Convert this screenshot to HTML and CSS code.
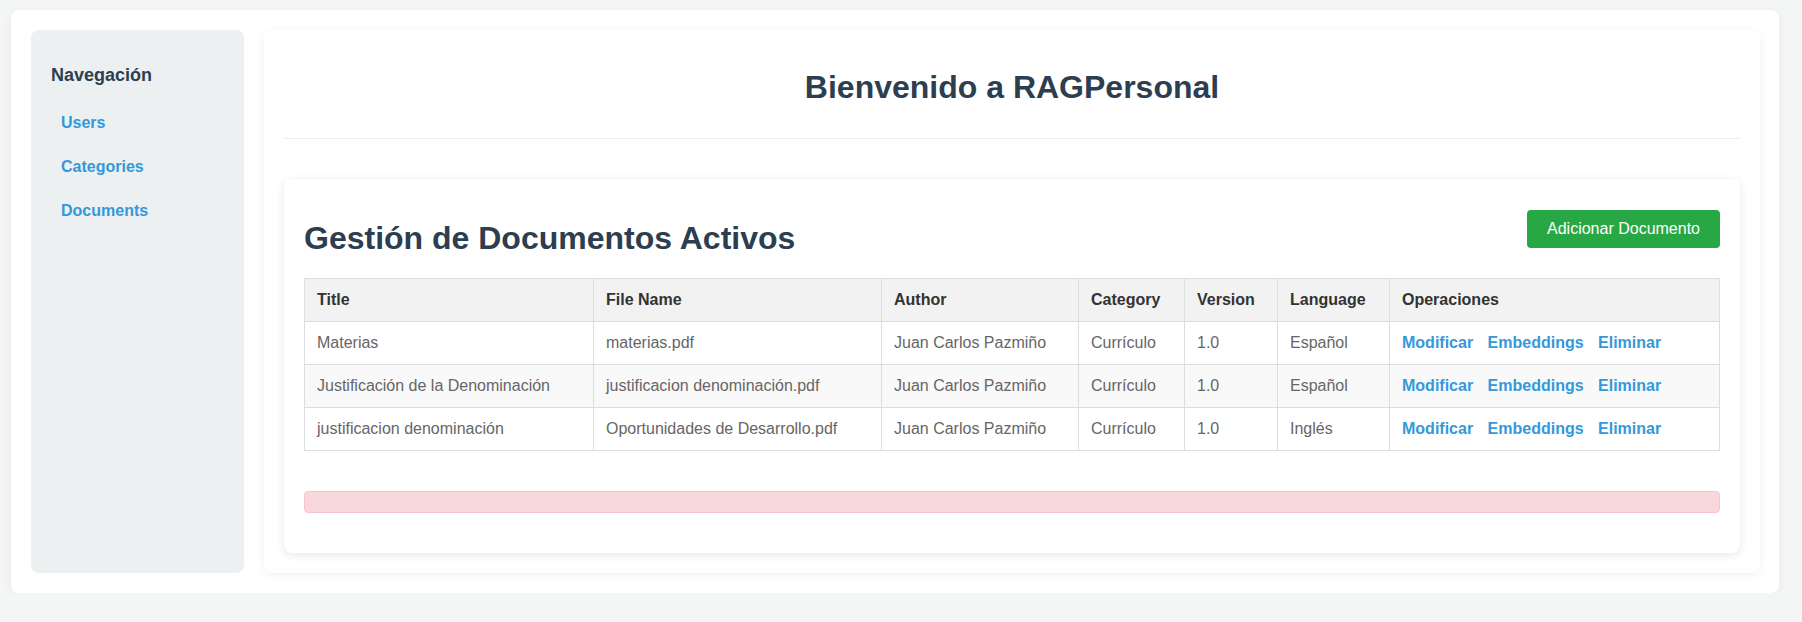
FILE: index.html
```html
<!DOCTYPE html>
<html lang="es">
<head>
<meta charset="utf-8">
<title>RAGPersonal</title>
<link rel="stylesheet" href="styles.css">
</head>
<body>
<div class="app">
  <aside class="sidebar">
    <h3 class="nav-title">Navegación</h3>
    <ul class="nav-list">
      <li><a href="#" class="nav-link">Users</a></li>
      <li><a href="#" class="nav-link">Categories</a></li>
      <li><a href="#" class="nav-link">Documents</a></li>
    </ul>
  </aside>
  <main class="main">
    <header class="page-header">
      <h1 class="page-title">Bienvenido a RAGPersonal</h1>
    </header>
    <section class="card">
      <div class="card-head">
        <h2 class="card-title">Gestión de Documentos Activos</h2>
        <button class="btn-add" type="button">Adicionar Documento</button>
      </div>
      <table class="doc-table">
        <colgroup>
          <col class="c-title">
          <col class="c-file">
          <col class="c-author">
          <col class="c-cat">
          <col class="c-ver">
          <col class="c-lang">
          <col class="c-ops">
        </colgroup>
        <thead>
          <tr>
            <th>Title</th>
            <th>File Name</th>
            <th>Author</th>
            <th>Category</th>
            <th>Version</th>
            <th>Language</th>
            <th>Operaciones</th>
          </tr>
        </thead>
        <tbody>
          <tr>
            <td>Materias</td>
            <td>materias.pdf</td>
            <td>Juan Carlos Pazmiño</td>
            <td>Currículo</td>
            <td>1.0</td>
            <td>Español</td>
            <td><a href="#" class="op">Modificar</a> <a href="#" class="op">Embeddings</a> <a href="#" class="op">Eliminar</a></td>
          </tr>
          <tr>
            <td>Justificación de la Denominación</td>
            <td>justificacion denominación.pdf</td>
            <td>Juan Carlos Pazmiño</td>
            <td>Currículo</td>
            <td>1.0</td>
            <td>Español</td>
            <td><a href="#" class="op">Modificar</a> <a href="#" class="op">Embeddings</a> <a href="#" class="op">Eliminar</a></td>
          </tr>
          <tr>
            <td>justificacion denominación</td>
            <td>Oportunidades de Desarrollo.pdf</td>
            <td>Juan Carlos Pazmiño</td>
            <td>Currículo</td>
            <td>1.0</td>
            <td>Inglés</td>
            <td><a href="#" class="op">Modificar</a> <a href="#" class="op">Embeddings</a> <a href="#" class="op">Eliminar</a></td>
          </tr>
        </tbody>
      </table>
      <div class="alert"></div>
    </section>
  </main>
</div>
</body>
</html>
```
FILE: styles.css
```css
* { box-sizing: border-box; }

body {
  margin: 0;
  background: #f4f6f6;
  font-family: "Liberation Sans", Arial, sans-serif;
  color: #333;
}

.app {
  width: 1768px;
  margin: 10px 0 0 11px;
  background: #fff;
  border-radius: 8px;
  padding: 20px;
  display: flex;
  gap: 20px;
  box-shadow: 0 2px 10px rgba(0, 0, 0, 0.06);
}

.sidebar {
  width: 213px;
  flex-shrink: 0;
  background: #ecf0f1;
  border-radius: 8px;
  padding: 20px;
}

.nav-title {
  margin: 15px 0 20px;
  font-size: 18px;
  font-weight: bold;
  color: #2c3e50;
}

.nav-list {
  list-style: none;
  margin: 0;
  padding: 0;
}

.nav-list li {
  margin-bottom: 10px;
}

.nav-link {
  display: block;
  padding: 8px 10px;
  color: #3498db;
  font-weight: bold;
  font-size: 16px;
  text-decoration: none;
}

.main {
  flex: 1;
  background: #fff;
  border-radius: 8px;
  padding: 20px;
  box-shadow: 0 2px 10px rgba(0, 0, 0, 0.06);
}

.page-header {
  padding: 19px 0 32px;
  border-bottom: 1px solid #eee;
  text-align: center;
}

.page-title {
  margin: 0;
  font-size: 32px;
  font-weight: bold;
  color: #2c3e50;
}

.card {
  margin-top: 40px;
  background: #fff;
  border-radius: 8px;
  padding: 20px;
  box-shadow: 0 2px 10px rgba(0, 0, 0, 0.1);
}

.card-head {
  display: flex;
  justify-content: space-between;
  align-items: flex-start;
}

.card-title {
  margin: 21px 0 21px;
  font-size: 32px;
  font-weight: bold;
  color: #2c3e50;
}

.btn-add {
  margin-top: 11px;
  background: #28a745;
  color: #fff;
  border: none;
  border-radius: 4px;
  padding: 10px 20px;
  font-family: "Liberation Sans", Arial, sans-serif;
  font-size: 16px;
  line-height: 18px;
  cursor: pointer;
}

.doc-table {
  width: 100%;
  border-collapse: collapse;
  table-layout: fixed;
}

.c-title { width: 289px; }
.c-file { width: 288px; }
.c-author { width: 197px; }
.c-cat { width: 106px; }
.c-ver { width: 93px; }
.c-lang { width: 112px; }
.c-ops { width: 330px; }

.doc-table th,
.doc-table td {
  padding: 12px;
  border: 1px solid #ddd;
  text-align: left;
  font-size: 16px;
  line-height: 18px;
  white-space: nowrap;
}

.doc-table th {
  background: #f2f2f2;
  color: #333;
  font-weight: bold;
}

.doc-table td {
  color: #666;
}

.doc-table tbody tr:nth-child(even) {
  background: #f9f9f9;
}

.op {
  color: #3498db;
  font-weight: bold;
  text-decoration: none;
  margin-right: 10px;
}

.alert {
  margin: 40px 0 20px;
  padding: 10px;
  background: #f8d7da;
  border: 1px solid #f5c6cb;
  border-radius: 4px;
}
```
